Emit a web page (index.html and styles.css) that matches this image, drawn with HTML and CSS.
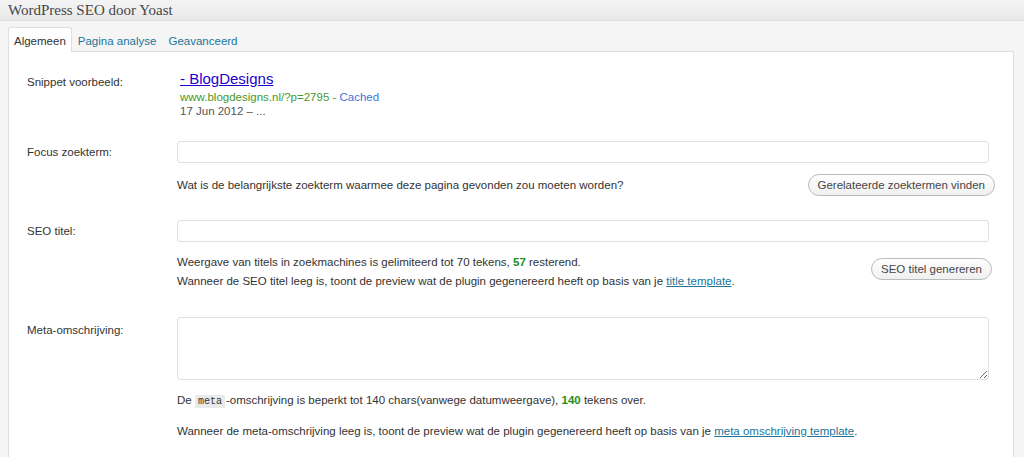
FILE: index.html
```html
<!DOCTYPE html>
<html lang="nl">

<head>
  <meta charset="UTF-8" />
  <meta name="viewport" content="width=device-width, initial-scale=1.0" />
  <title>WordPress SEO door Yoast</title>
  <link rel="stylesheet" href="styles.css">
</head>

<body>
  <h3 class="box-title">WordPress SEO door Yoast</h3>

  <div class="box-inside">
    <ul class="tabs">
      <li class="tab active">Algemeen</li>
      <li class="tab">Pagina analyse</li>
      <li class="tab">Geavanceerd</li>
    </ul>

    <div class="panel">
      <div class="row snippet-row">
        <div class="label">Snippet voorbeeld:</div>
        <div class="field">
          <a class="snippet-title" href="#">- BlogDesigns</a>
          <div class="snippet-url">www.blogdesigns.nl/?p=2795 - <span class="cached">Cached</span></div>
          <div class="snippet-date">17 Jun 2012 &ndash; ...</div>
        </div>
      </div>

      <div class="row">
        <div class="label">Focus zoekterm:</div>
        <div class="field">
          <input type="text" class="text-input" />
          <div class="help with-button">
            <span>Wat is de belangrijkste zoekterm waarmee deze pagina gevonden zou moeten worden?</span>
            <button class="button">Gerelateerde zoektermen vinden</button>
          </div>
        </div>
      </div>

      <div class="row seo-row">
        <div class="label">SEO titel:</div>
        <div class="field">
          <input type="text" class="text-input" />
          <div class="help with-button">
            <span>Weergave van titels in zoekmachines is gelimiteerd tot 70 tekens, <strong class="count">57</strong> resterend.<br />
              Wanneer de SEO titel leeg is, toont de preview wat de plugin gegenereerd heeft op basis van je <a href="#">title template</a>.</span>
            <button class="button button-small">SEO titel genereren</button>
          </div>
        </div>
      </div>

      <div class="row meta-row">
        <div class="label">Meta-omschrijving:</div>
        <div class="field">
          <textarea class="text-area"></textarea>
          <p class="help">De <code>meta</code>-omschrijving is beperkt tot 140 chars(vanwege datumweergave), <strong class="count">140</strong> tekens over.</p>
          <p class="help">Wanneer de meta-omschrijving leeg is, toont de preview wat de plugin gegenereerd heeft op basis van je <a href="#">meta omschrijving template</a>.</p>
        </div>
      </div>
    </div>
  </div>
</body>

</html>
```

FILE: styles.css
```css
body {
  margin: 0;
  background-color: #f5f5f5;
  color: #333;
  font-family: Arial, "Liberation Sans", sans-serif;
  font-size: 11.5px;
  line-height: 14px;
}

.box-title {
  margin: 0;
  height: 20px;
  line-height: 20px;
  padding-left: 8px;
  font-family: Georgia, "Liberation Serif", serif;
  font-size: 15px;
  font-weight: normal;
  color: #464646;
  background: linear-gradient(#f4f4f4, #e9e9e9);
  border-bottom: 1px solid #dcdcdc;
}

.box-inside {
  padding: 6px 10px 0 8px;
}

.tabs {
  display: flex;
  margin: 0;
  padding: 0;
  list-style: none;
}

.tab {
  padding: 6px 5px 3px;
  color: #21759b;
  border: 1px solid transparent;
  border-bottom: none;
}

.tab.active {
  color: #333;
  background-color: #fff;
  border-color: #dfdfdf;
  border-radius: 3px 3px 0 0;
  margin-bottom: -1px;
  position: relative;
}

.panel {
  background-color: #fff;
  border: 1px solid #dfdfdf;
  padding: 18px 19px 20px 18px;
}

.row {
  display: grid;
  grid-template-columns: 150px 1fr;
  margin-bottom: 24px;
}

.label {
  padding-top: 4px;
  color: #333;
}

.snippet-row {
  margin-bottom: 23px;
}

.snippet-row .label {
  padding-top: 5px;
}

.seo-row {
  margin-bottom: 26px;
}

.meta-row .label {
  padding-top: 6px;
}

.snippet-title {
  display: inline-block;
  font-size: 15px;
  line-height: 18px;
  color: #2200cc;
  margin-left: 3px;
}

.snippet-url {
  color: #48982b;
  margin: 2px 0 0 3px;
}

.cached {
  color: #4272db;
}

.snippet-date {
  color: #555;
  margin-left: 3px;
}

.text-input,
.text-area {
  display: block;
  box-sizing: border-box;
  width: 812px;
  border: 1px solid #dfdfdf;
  border-radius: 3px;
  font-family: inherit;
  background-color: #fff;
}

.text-input {
  height: 22px;
}

.text-area {
  height: 63px;
  resize: vertical;
}

.help {
  margin: 11px 0 0;
  line-height: 19px;
}

.with-button {
  display: flex;
  justify-content: space-between;
  align-items: center;
}

.button {
  font-family: inherit;
  font-size: 11.5px;
  color: #464646;
  background: linear-gradient(#fefefe, #f0f0f0);
  border: 1px solid #bbb;
  border-radius: 11px;
  height: 22px;
  padding: 0 9px;
  margin-right: -1px;
}

.button-small {
  margin-right: 2px;
  margin-bottom: 6px;
}

.count {
  color: #1c8e1c;
}

a {
  color: #21759b;
}

code {
  font-family: Consolas, "Liberation Mono", monospace;
  font-size: 10px;
  background-color: #eaeaea;
  padding: 1px 3px;
  margin-right: 1px;
}
```
